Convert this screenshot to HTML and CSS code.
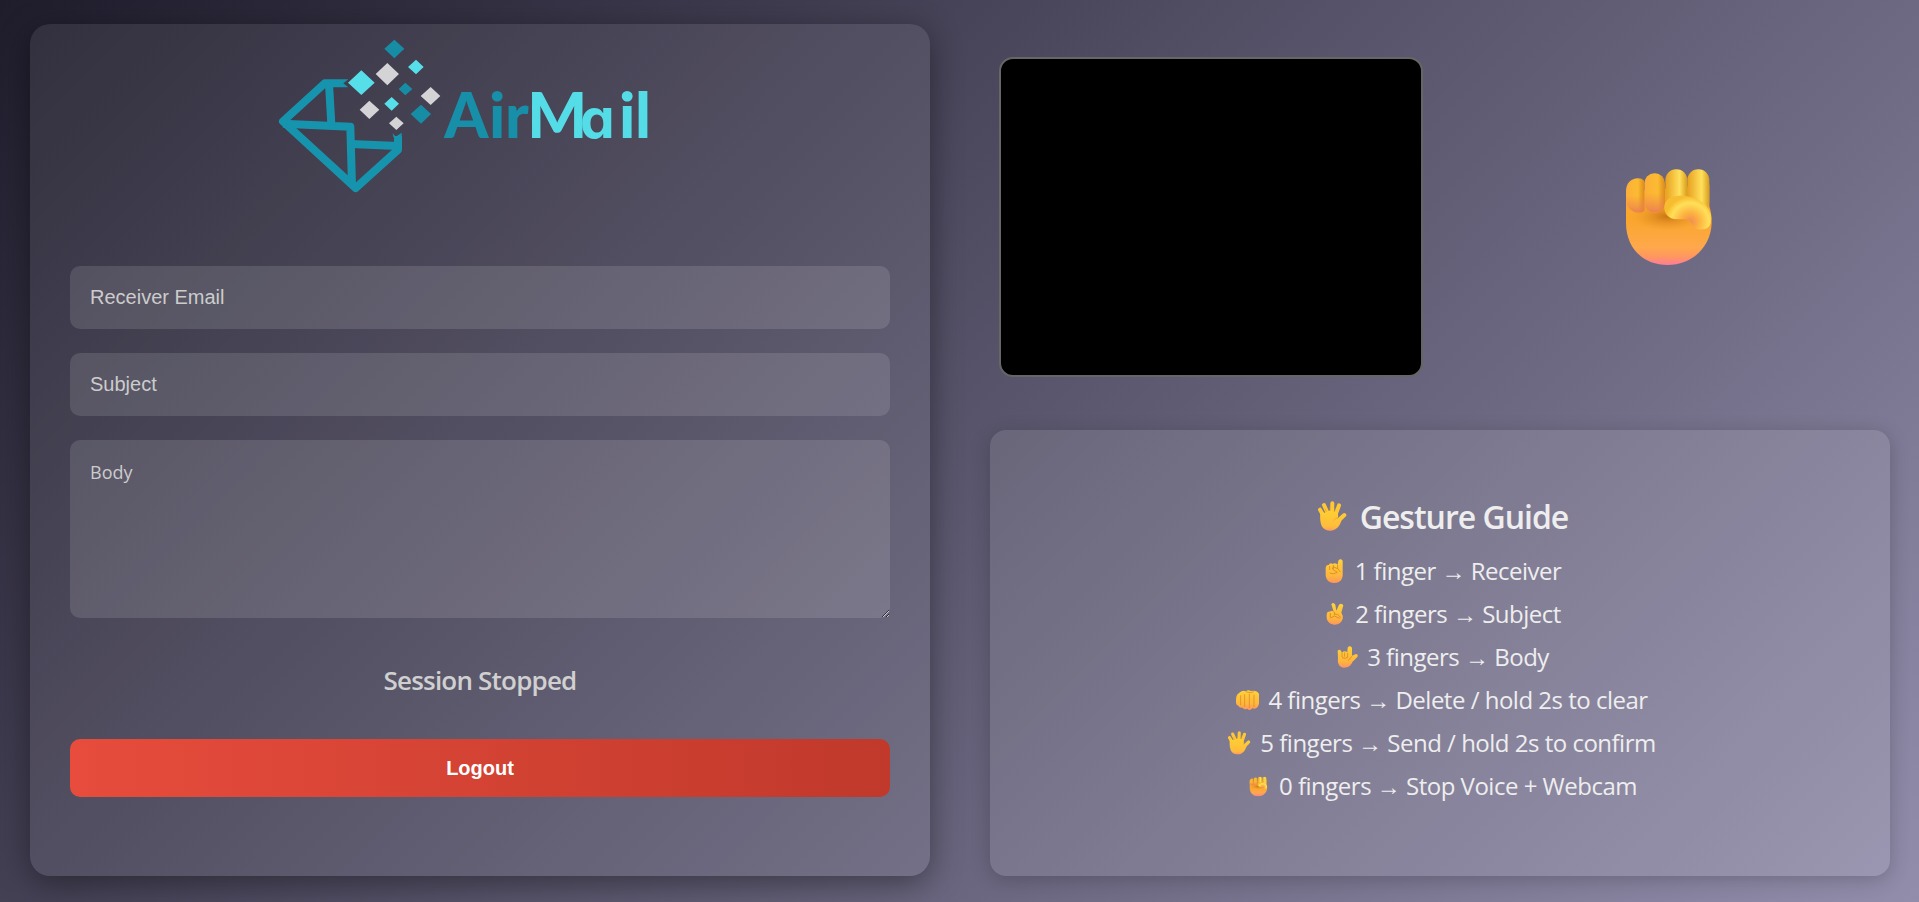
FILE: index.html
```html
<!DOCTYPE html>
<html lang="en">
<head>
<meta charset="utf-8">
<title>AirMail</title>
<link rel="stylesheet" href="styles.css">
</head>
<body>
<svg class="defs" aria-hidden="true">
  <defs>
    <linearGradient id="skin" x1="0" y1="0" x2="0" y2="1"><stop offset="0" stop-color="#ffd23a"/><stop offset=".7" stop-color="#ffb63c"/><stop offset="1" stop-color="#ff9460"/></linearGradient>
    <linearGradient id="skinOpen" x1="0" y1="0" x2="0" y2="1"><stop offset="0" stop-color="#ffd032"/><stop offset=".8" stop-color="#ffbc3c"/><stop offset="1" stop-color="#ff9a60"/></linearGradient>
    <linearGradient id="palm" x1="0" y1="0" x2="0" y2="1"><stop offset="0" stop-color="#f8a92e"/><stop offset=".45" stop-color="#faa62e"/><stop offset=".78" stop-color="#ffa84c"/><stop offset=".9" stop-color="#ff9660"/><stop offset="1" stop-color="#ff7c98"/></linearGradient>
    <radialGradient id="shade"><stop offset="0" stop-color="#c87412" stop-opacity=".95"/><stop offset="1" stop-color="#e8942a" stop-opacity="0"/></radialGradient>
    <linearGradient id="fingerA" x1="0" y1="0" x2="1" y2="0"><stop offset="0" stop-color="#fcae38"/><stop offset=".65" stop-color="#fcbb32"/><stop offset="1" stop-color="#dc8a1c"/></linearGradient>
    <linearGradient id="fingerB" x1="0" y1="0" x2="1" y2="0"><stop offset="0" stop-color="#e8a020"/><stop offset=".65" stop-color="#ffe05c"/><stop offset="1" stop-color="#d89c1c"/></linearGradient>
    <linearGradient id="blush" x1="0" y1="0" x2="0" y2="1"><stop offset=".5" stop-color="#ee8350" stop-opacity="0"/><stop offset="1" stop-color="#ea7c50" stop-opacity=".9"/></linearGradient>
    <radialGradient id="thumb" gradientUnits="userSpaceOnUse" cx="275" cy="212" r="76"><stop offset="0" stop-color="#f08a58"/><stop offset=".35" stop-color="#fcb040"/><stop offset=".75" stop-color="#ffe058"/><stop offset="1" stop-color="#f8bc30"/></radialGradient>
    <symbol id="fist" viewBox="80 50 264 294">
      <path d="M83 122L333 100V165Q340 185 340 215C338 286 282 341 208 341C134 341 83 290 83 214Z" fill="url(#palm)"/>
      <ellipse cx="205" cy="195" rx="105" ry="44" fill="url(#shade)"/>
      <rect x="267" y="54" width="66" height="126" rx="32" fill="url(#fingerB)"/>
      <rect x="201" y="54" width="66" height="126" rx="32" fill="url(#fingerB)"/>
      <rect x="138" y="66" width="62" height="118" rx="30" fill="url(#fingerA)"/>
      <rect x="138" y="66" width="62" height="118" rx="30" fill="url(#blush)"/>
      <path d="M138 88V178Q131 184 122 184C98 184 83 165 83 142V119C83 96 98 81 119 81Q131 81 138 88Z" fill="url(#fingerA)"/>
      <path d="M138 88V178Q131 184 122 184C98 184 83 165 83 142V119C83 96 98 81 119 81Q131 81 138 88Z" fill="url(#blush)"/>
      <path d="M234 134C278 129 327 148 338 190Q343 228 317 234C296 236 289 232 281 218Q275 206 264 204H235C210 202 198 187 198 169C198 149 213 136 234 134Z" fill="url(#thumb)"/>
    </symbol>
  </defs>
</svg>

<main class="page">
  <section class="card composer">
    <svg class="logo" viewBox="0 12 1320 570" role="img" aria-label="AirMail">
      <g fill="none" stroke="#1794ad" stroke-width="24" stroke-linejoin="round">
        <path d="M264 190H194L69 304L287 504L414 389V348" stroke-linejoin="round"/>
        <path d="M69 311L271 320L276 495M207 192L214 312M272 372L414 378"/>
      </g>
      <path d="M398 340L407 350L425 338V352H400Z" fill="#1794ad"/>
      <path d="M270 174L250 190L270 206Z" fill="#413d4c"/>
      <path d="M403 59l30 27-30 29-30-29zM436 188l21 19-21 19-20-19zM483 254l30 28-30 29-31-29z" fill="#178da5"/>
      <path d="M304 151l40 37-40 37-40-37zM468 119l23 22-23 22-24-22zM395 231l22 20-22 21-22-21z" fill="#57dfe9"/>
      <path d="M382 129l35 33-35 34-35-34zM512 201l29 27-29 27-30-27zM328 242l30 27-30 28-29-28zM409 290l22 20-22 20-22-20z" fill="#d4d3d6"/>
      <text class="wordmark" y="353"><tspan class="wordmark-air" x="553 687 735">Air</tspan><tspan class="wordmark-mail" x="802">M</tspan><tspan class="wordmark-mail round-a" x="960">a</tspan><tspan class="wordmark-mail" x="1077 1125">il</tspan></text>
    </svg>
    <form class="form">
      <input class="field" type="text" placeholder="Receiver Email">
      <input class="field" type="text" placeholder="Subject">
      <textarea class="field body-field" placeholder="Body"></textarea>
      <p class="status">Session Stopped</p>
      <button class="logout" type="button">Logout</button>
    </form>
  </section>

  <section class="side">
    <div class="live">
      <div class="webcam"></div>
      <div class="gesture"><svg class="gesture-icon"><use href="#fist"/></svg></div>
    </div>
    <div class="guide">
      <h2 class="guide-title">
        <svg class="title-icon" viewBox="285 46 120 120"><g fill="none" stroke="#ffc832" stroke-width="12" stroke-linecap="round"><path d="M324 113L309 87M332 98L321 73M345 95L346 68M357 99L366 74M358 125L382 103"/></g><path d="M310 93Q328 101 340 88Q355 91 363 99Q365 111 361 116Q370 112 374 104L386 100Q386 108 374 119C367 140 355 151 338 150C314 149 307 129 310 93Z" fill="url(#skinOpen)"/><path d="M328 94l-4-10M339 91V79M352 92l3-10M350 120q5-8 12-9" fill="none" stroke="#e99c25" stroke-width="2"/></svg>
        <span>Gesture Guide</span>
      </h2>
      <ul class="guide-list">
        <li><svg class="row-icon" viewBox="300 227 90 90"><path d="M358 241Q364 233 371 241V285C370 301 360 309 344 308C329 307 320 298 320 282V262Q321 252 329 254Q333 246 341 251Q348 246 356 253Z" fill="url(#skin)"/><path d="M332 257v12M343 254v13M356 254v12M332 278q12 6 23-2l-13-8q-5-6 2-8 15 3 20 15" fill="none" stroke="#d9881f" stroke-width="2.5"/></svg><span>1 finger <i>→</i> Receiver</span></li>
        <li><svg class="row-icon" viewBox="300 356 90 90"><path d="M337 372Q343 364 349 373L352 391L360 373Q368 366 373 375L367 397Q373 405 371 416C367 428 358 434 345 433C331 431 322 422 323 408V402Q324 392 333 394Q337 389 344 394Z" fill="url(#skin)"/><path d="M334 398v14M345 394l3 8M334 413l12-6 16 7M344 402q14-3 21 10" fill="none" stroke="#d9881f" stroke-width="2.5"/></svg><span>2 fingers <i>→</i> Subject</span></li>
        <li><svg class="row-icon" viewBox="337 5 90 90"><path d="M357 31Q361 25 367 31L370 37Q376 30 386 35L387 22Q393 14 400 22V46L412 41Q420 42 416 50L401 65C396 78 386 83 374 82C361 80 356 69 358 54Z" fill="url(#skin)"/><path d="M370 37v13M378 36v13M387 37v13M370 52q10 5 18-2M389 61l10-13" fill="none" stroke="#d9881f" stroke-width="2.5"/></svg><span>3 fingers <i>→</i> Body</span></li>
        <li><svg class="row-icon" viewBox="45 137 90 90"><path d="M66 161Q78 151 86 156Q94 150 101 155Q119 151 126 163V194C122 208 112 210 106 207Q99 216 91 208Q82 213 77 205Q67 207 64 199Q56 197 57 184Q56 168 66 161Z" fill="url(#skin)"/><path d="M71 168V198M83 165V203M97 163V206M111 166V203M86 157q13 6 25 0" fill="none" stroke="#e28b25" stroke-width="2.5"/></svg><span>4 fingers <i>→</i> Delete / hold 2s to clear</span></li>
        <li><svg class="row-icon" viewBox="288 50 114 114"><g fill="none" stroke="#ffc832" stroke-width="12" stroke-linecap="round"><path d="M324 113L309 87M332 98L321 73M345 95L346 68M357 99L366 74M358 125L382 103"/></g><path d="M310 93Q328 101 340 88Q355 91 363 99Q365 111 361 116Q370 112 374 104L386 100Q386 108 374 119C367 140 355 151 338 150C314 149 307 129 310 93Z" fill="url(#skinOpen)"/><path d="M328 94l-4-10M339 91V79M352 92l3-10" fill="none" stroke="#e99c25" stroke-width="2"/></svg><span>5 fingers <i>→</i> Send / hold 2s to confirm</span></li>
        <li><svg class="row-icon" viewBox="0 0 30 30"><use href="#fist" x="6" y="5.5" width="19" height="20"/></svg><span>0 fingers <i>→</i> Stop Voice + Webcam</span></li>
      </ul>
    </div>
  </section>
</main>
</body>
</html>
```

FILE: styles.css
```css
* { box-sizing: border-box; }
body {
  margin: 0;
  height: 902px;
  overflow: hidden;
  background: linear-gradient(135deg, #1f1c2c, #928dab);
  color: #eee;
  font-family: "Open Sans", "Noto Sans", sans-serif;
}
.defs { position: absolute; width: 0; height: 0; }
.page {
  display: grid;
  grid-template-columns: 900px 900px;
  column-gap: 60px;
  height: 902px;
  padding: 24px 29px 26px 30px;
}
.card {
  border-radius: 20px;
  background: rgba(255, 255, 255, .08);
  box-shadow: 0 8px 32px rgba(0, 0, 0, .4);
}
.composer { display: flex; flex-direction: column; align-items: center; }
.logo { width: 440px; height: 190px; margin-bottom: 52px; flex: none; }
.wordmark { font: 900 189px Lato, sans-serif; }
.wordmark-air { fill: #178fa8; }
.wordmark-mail { fill: #55dde7; }
.round-a { font-family: Inter, sans-serif; font-size: 165px; font-weight: 700; font-feature-settings: "cv11"; }
.form { display: flex; flex-direction: column; gap: 24px; width: 820px; }
.field {
  display: block;
  width: 100%;
  height: 63px;
  padding: 20px;
  border: 0;
  border-radius: 10px;
  outline: 0;
  background: rgba(255, 255, 255, .12);
  color: #fff;
  font: 20px "Liberation Sans", Arial, sans-serif;
}
.field::placeholder { color: #ccc; opacity: 1; }
.body-field { height: 178px; font: 18px/24px "Open Sans", sans-serif; resize: vertical; }
.status {
  margin: 20px 0 16px;
  height: 37px;
  color: #d0d0d0;
  font-size: 26px;
  font-weight: 600;
  line-height: 37px;
  letter-spacing: -.8px;
  text-align: center;
}
.logout {
  height: 58px;
  border: 0;
  border-radius: 10px;
  background: linear-gradient(90deg, #e74c3c, #c0392b);
  color: #fff;
  font: bold 20px "Liberation Sans", Arial, sans-serif;
}
.side { display: flex; flex-direction: column; }
.live { display: grid; grid-template-columns: 424px 1fr; height: 406px; padding: 33px 0 0 9px; }
.webcam { height: 320px; border: 2px solid #666; border-radius: 14px; background: #000; }
.gesture { display: flex; align-items: center; justify-content: center; height: 320px; padding-left: 25px; }
.gesture-icon { width: 88px; height: 98px; }
.guide {
  height: 446px;
  padding-top: 62px;
  border-radius: 16px;
  background: rgba(255, 255, 255, .1);
  box-shadow: 0 4px 20px rgba(0, 0, 0, .2);
}
.guide-title {
  display: flex;
  align-items: center;
  justify-content: center;
  gap: 8px;
  height: 48px;
  margin: 0 0 9px;
  font-size: 32px;
  font-weight: 600;
  letter-spacing: -1px;
}
.title-icon { width: 40px; height: 40px; }
.guide-list { margin: 0; padding: 0; list-style: none; }
.guide-list li {
  display: flex;
  align-items: center;
  justify-content: center;
  gap: 6px;
  height: 43px;
  font-size: 24px;
  letter-spacing: -.5px;
  white-space: nowrap;
}
.guide-list i { font-family: "Liberation Sans", sans-serif; font-style: normal; }
.row-icon { width: 30px; height: 30px; }
```
